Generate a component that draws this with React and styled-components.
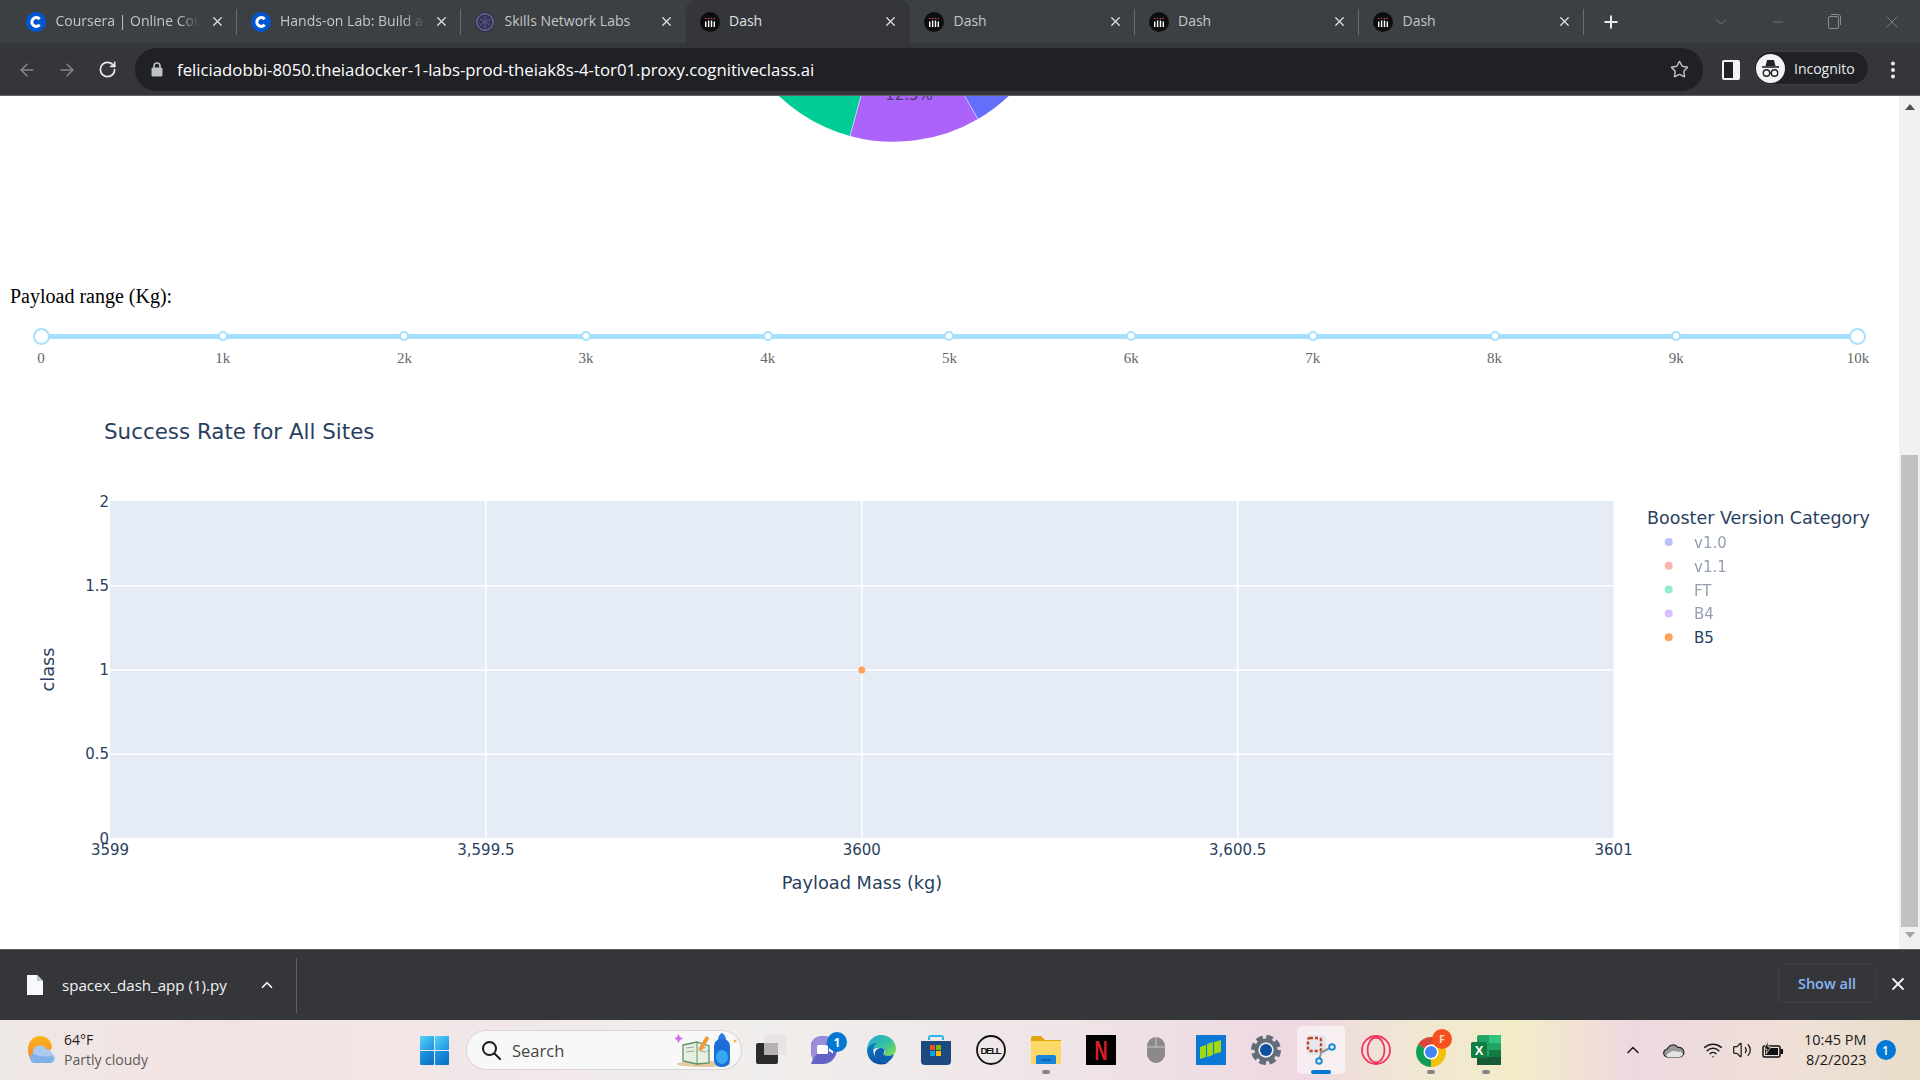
import React from 'react'
import styled, { createGlobalStyle } from 'styled-components'
import { ArrowLeft, ArrowRight, RotateCw, Star, Plus, ChevronUp, ChevronDown, Minus, X, Wifi, Volume2 } from 'lucide-react'

const UI_FONT = '"Open Sans", "Noto Sans", "Liberation Sans", sans-serif'
const PLOT_FONT = '"DejaVu Sans", Verdana, sans-serif'

const Global = createGlobalStyle`
  html, body { margin: 0; padding: 0; overflow: hidden; background: #fff; }
  * { box-sizing: border-box; }
`

const Screen = styled.div`
  width: 1920px;
  height: 1080px;
  display: flex;
  flex-direction: column;
  overflow: hidden;
  font-family: ${UI_FONT};
`

/* browser chrome */
const TabStrip = styled.div`
  height: 43px;
  flex: none;
  display: flex;
  padding-left: 12px;
  background: #3c4043;
`
const Tab = styled.div`
  width: 224.5px;
  height: 43px;
  flex: none;
  display: flex;
  align-items: center;
  padding: 0 12px 0 14px;
  gap: 9.5px;
  position: relative;
  background: ${(p) => (p.$active ? '#35363a' : 'transparent')};
  border-radius: ${(p) => (p.$active ? '10px 10px 0 0' : '0')};
  &::after {
    content: '';
    display: ${(p) => (p.$sep ? 'block' : 'none')};
    position: absolute;
    right: 0;
    top: 9px;
    height: 26px;
    width: 1px;
    background: #6a6d70;
  }
`
const TabTitle = styled.span`
  flex: 1;
  margin-top: -2px;
  font-size: 14px;
  color: ${(p) => (p.$active ? '#dfe1e5' : '#c4c7ca')};
  white-space: nowrap;
  overflow: hidden;
  -webkit-mask-image: ${(p) => (p.$fade ? 'linear-gradient(90deg, #000 85%, transparent)' : 'none')};
`
const NewTab = styled.div`
  width: 40px;
  display: flex;
  align-items: center;
  justify-content: center;
  margin-left: 7px;
  color: #e8eaed;
`
const WindowControls = styled.div`
  margin-left: auto;
  display: flex;
  align-items: center;
  color: #8b8e91;
`
const WindowButton = styled.div`
  width: 57px;
  display: flex;
  justify-content: center;
`
const Toolbar = styled.div`
  height: 53px;
  flex: none;
  display: flex;
  align-items: flex-start;
  padding: 5px 0 0 7px;
  background: #35363a;
  border-bottom: 1px solid #606164;
`
const NavButton = styled.div`
  width: 40px;
  height: 43px;
  flex: none;
  display: flex;
  align-items: center;
  justify-content: center;
  color: ${(p) => (p.$on ? '#e8eaed' : '#85888b')};
`
const AddressBar = styled.div`
  width: 1568px;
  height: 43px;
  flex: none;
  margin-left: 8px;
  padding: 0 14px 0 16px;
  display: flex;
  align-items: center;
  border-radius: 22px;
  background: #202124;
  color: #bdc1c6;
`
const Url = styled.span`
  margin-left: 14px;
  font-size: 16.76px;
  color: #fff;
  white-space: nowrap;
  flex: 1;
`
const PanelButton = styled.div`
  width: 47px;
  height: 43px;
  margin-left: 4px;
  flex: none;
  display: flex;
  align-items: center;
  justify-content: center;
`
const IncognitoPill = styled.div`
  width: 115px;
  height: 34px;
  margin-top: 3px;
  flex: none;
  display: flex;
  align-items: center;
  padding-left: 1px;
  gap: 9px;
  border-radius: 17px;
  background: #202124;
  border: 1px solid #3c3d41;
  color: #e8eaed;
  font-size: 14px;
`
const MenuDots = styled.div`
  flex: 1;
  height: 43px;
  padding-right: 4px;
  display: flex;
  align-items: center;
  justify-content: center;
`

/* page area */
const Viewport = styled.div`
  flex: 1;
  min-height: 0;
  display: flex;
`
const Page = styled.main`
  flex: 1;
  min-width: 0;
  display: flex;
  flex-direction: column;
  background: #fff;
`
const PlotSvg = styled.svg`
  display: block;
  flex: none;
`
const ChartSvg = styled(PlotSvg)`
  margin-top: auto;
`
const RangeLabel = styled.div`
  height: 23px;
  margin-top: -1px;
  padding-left: 10px;
  font: 20px/23px "Liberation Serif", serif;
  color: #000;
`
const Slider = styled.div`
  margin: 19.5px 41px 0 41px;
  height: 17px;
  display: flex;
  justify-content: space-between;
  position: relative;
  &::before {
    content: '';
    position: absolute;
    left: 0;
    right: 0;
    top: 6px;
    height: 5px;
    background: #a6e0fc;
  }
`
const Mark = styled.div`
  width: 0;
  display: flex;
  flex-direction: column;
  align-items: center;
  position: relative;
`
const Dot = styled.div`
  flex: none;
  width: ${(p) => (p.$handle ? '17px' : '10px')};
  height: ${(p) => (p.$handle ? '17px' : '10px')};
  margin-top: ${(p) => (p.$handle ? '0' : '3.5px')};
  border-radius: 50%;
  background: #fff;
  border: 2px solid #a6e0fc;
`
const MarkLabel = styled.div`
  margin-top: ${(p) => (p.$handle ? '4px' : '7.5px')};
  font: 15px/18px "Liberation Serif", serif;
  color: #666;
  white-space: nowrap;
`
const Scrollbar = styled.div`
  width: 21px;
  flex: none;
  display: flex;
  flex-direction: column;
  align-items: center;
  background: #f1f1f1;
`
const ScrollArrow = styled.div`
  width: 0;
  height: 0;
  flex: none;
  margin: ${(p) => (p.$down ? '5px 0 0' : '8px 0 0')};
  border-left: 5px solid transparent;
  border-right: 5px solid transparent;
  border-bottom: ${(p) => (p.$down ? '0' : '6px solid #505050')};
  border-top: ${(p) => (p.$down ? '6px solid #a3a3a3' : '0')};
`
const ScrollThumb = styled.div`
  width: 17px;
  height: 472px;
  flex: none;
  margin-top: 345px;
  background: #c1c1c1;
`

/* download shelf */
const Shelf = styled.div`
  height: 71px;
  flex: none;
  display: flex;
  align-items: center;
  padding-left: 27px;
  background: #35363a;
  border-top: 1px solid #5a5b5e;
  color: #fff;
`
const FileName = styled.span`
  margin-left: 19px;
  margin-bottom: 1px;
  font-size: 15.1px;
  color: #f1f3f4;
  width: 196px;
  white-space: nowrap;
`
const ShelfDivider = styled.div`
  width: 1px;
  height: 55px;
  margin-left: 20px;
  background: #5f6164;
`
const ShowAll = styled.div`
  margin: 0 0 3px auto;
  width: 98px;
  height: 39px;
  display: flex;
  align-items: center;
  justify-content: center;
  border: 1px solid #3f4044;
  border-radius: 4px;
  color: #8ab4f8;
  font-size: 14.5px;
  font-weight: 600;
`
const ShelfClose = styled.div`
  width: 44px;
  margin-bottom: 3px;
  display: flex;
  justify-content: center;
  color: #f1f3f4;
`

/* windows taskbar */
const Taskbar = styled.div`
  height: 60px;
  flex: none;
  display: flex;
  align-items: center;
  background: linear-gradient(90deg, #eee8e4 0%, #f3e2e2 12%, #f1e8ea 28%, #f0eeec 40%, #efe3e6 57%, #eed8e2 68%, #f0e6d4 73%, #f3ecc8 79%, #eed8e0 85%, #efe0d6 94%, #e8dcc8 100%);
`
const Weather = styled.div`
  width: 420px;
  flex: none;
  display: flex;
  align-items: center;
  padding-left: 28px;
  gap: 9px;
`
const WeatherText = styled.div`
  display: flex;
  flex-direction: column;
  font-size: 14px;
  line-height: 20px;
  color: #1c1c1c;
`
const WeatherSub = styled.span`
  color: #5a5a5a;
`
const SearchPill = styled.div`
  width: 274px;
  height: 38px;
  flex: none;
  margin-left: 18px;
  display: flex;
  align-items: center;
  padding: 0 0 0 14px;
  gap: 11px;
  border-radius: 19px;
  background: #f9f8f8;
  box-shadow: 0 0 0 1px #d9d5d5;
  font-size: 16.5px;
  color: #444;
`
const SearchText = styled.span`
  flex: 1;
`
const TaskIcons = styled.div`
  display: flex;
  margin-left: 2.5px;
`
const TaskSlot = styled.div`
  width: 55px;
  height: 60px;
  flex: none;
  display: flex;
  align-items: center;
  justify-content: center;
  position: relative;
  &::before {
    content: '';
    display: ${(p) => (p.$active ? 'block' : 'none')};
    position: absolute;
    left: 3px;
    right: 4px;
    top: 6px;
    bottom: 6px;
    border-radius: 5px;
    background: rgba(255, 255, 255, 0.55);
  }
  &::after {
    content: '';
    display: ${(p) => (p.$active || p.$running ? 'block' : 'none')};
    position: absolute;
    left: 50%;
    bottom: 6px;
    width: ${(p) => (p.$active ? '20px' : '8px')};
    height: 4px;
    margin-left: ${(p) => (p.$active ? '-10px' : '-4px')};
    border-radius: 2px;
    background: ${(p) => (p.$active ? '#0078d4' : '#858585')};
  }
  & > svg { position: relative; }
`
const Tray = styled.div`
  flex: 1;
  display: flex;
  align-items: center;
  padding-left: 102px;
  color: #1a1a1a;
`
const TrayIcon = styled.div`
  width: ${(p) => p.$w}px;
  display: flex;
  justify-content: center;
`
const Clock = styled.div`
  width: 73px;
  text-align: right;
  font-size: 14.5px;
  line-height: 20px;
  color: #1a1a1a;
  margin-left: 3px;
`
const NotifyBadge = styled.div`
  width: 20px;
  height: 20px;
  margin-left: 9px;
  border-radius: 50%;
  background: #0078d4;
  color: #fff;
  font-size: 12px;
  font-weight: 600;
  display: flex;
  align-items: center;
  justify-content: center;
`

const CourseraIcon = () => (
  <svg width="20" height="20" viewBox="0 0 20 20">
    <circle cx="10" cy="10" r="10" fill="#0056d2" />
    <path d="M13.6 7.2A4.4 4.4 0 1 0 13.6 12.8" fill="none" stroke="#fff" strokeWidth="3" />
  </svg>
)
const LabsIcon = () => (
  <svg width="20" height="20" viewBox="0 0 20 20">
    <circle cx="10" cy="10" r="10" fill="#2d2a4a" />
    <circle cx="10" cy="10" r="8.3" fill="#37355c" stroke="#77729f" strokeWidth="1.2" />
    <path d="M10 4v12M5 7l10 6M15 7L5 13" stroke="#625e8c" strokeWidth="0.9" />
  </svg>
)
const DashIcon = () => (
  <svg width="20" height="20" viewBox="0 0 20 20">
    <circle cx="10" cy="10" r="10" fill="#0d0d0f" />
    <path d="M5.7 6v1M8.6 6v1M11.5 6v1M14.3 6v1" stroke="#e0457b" strokeWidth="1.4" />
    <path d="M5.7 9.5V15M8.6 8.5V15M11.5 8.5V15M14.3 9.5V15" stroke="#fff" strokeWidth="1.4" />
  </svg>
)
const LockIcon = () => (
  <svg width="12" height="15" viewBox="0 0 12 15">
    <path d="M3 6V4a3 3 0 0 1 6 0v2" fill="none" stroke="#bdc1c6" strokeWidth="1.6" />
    <rect x="0.5" y="5.5" width="11" height="9" rx="1.5" fill="#bdc1c6" />
  </svg>
)
const IncognitoIcon = () => (
  <svg width="29" height="29" viewBox="0 0 29 29">
    <circle cx="14.5" cy="14.5" r="14.5" fill="#f1f3f4" />
    <path d="M9.5 12l1.6-6h6.8l1.6 6z" fill="#202124" />
    <path d="M6 13h17" stroke="#202124" strokeWidth="1.6" />
    <circle cx="10.5" cy="19" r="3.2" fill="none" stroke="#202124" strokeWidth="1.4" />
    <circle cx="18.5" cy="19" r="3.2" fill="none" stroke="#202124" strokeWidth="1.4" />
    <path d="M13.7 19h1.6" stroke="#202124" strokeWidth="1.4" />
  </svg>
)
const SidePanelIcon = () => (
  <svg width="18" height="20" viewBox="0 0 18 20">
    <rect x="1" y="1" width="16" height="18" rx="1" fill="#202124" stroke="#f1f3f4" strokeWidth="2" />
    <rect x="11" y="1" width="6" height="18" fill="#f1f3f4" />
  </svg>
)
const VDots = () => (
  <svg width="4" height="18" viewBox="0 0 4 18" fill="#e8eaed">
    <circle cx="2" cy="2.5" r="2" />
    <circle cx="2" cy="9" r="2" />
    <circle cx="2" cy="15.5" r="2" />
  </svg>
)
const FileIcon = () => (
  <svg width="16" height="20" viewBox="0 0 16 20">
    <path d="M0 0h10l6 6v14H0z" fill="#f8f9fa" />
    <path d="M10 0v6h6" fill="#c4c7ca" />
  </svg>
)
const WeatherIcon = () => (
  <svg width="27" height="28" viewBox="0 0 27 28">
    <defs>
      <linearGradient id="sunFill" x1="0" y1="0" x2="0" y2="1">
        <stop offset="0" stopColor="#fbb614" />
        <stop offset="1" stopColor="#f3803a" />
      </linearGradient>
    </defs>
    <path d="M12 0C5 0 0 6 0 13s2 13 10 13L24 12C24 5 19 0 12 0z" fill="url(#sunFill)" />
    <path d="M7 27a5 5 0 0 1-2-9.5A7 7 0 0 1 18 13a6 6 0 0 1 6 5 4.6 4.6 0 0 1-1 9z" fill="#a9cbf0" />
    <path d="M7 27a5 5 0 0 1-2-9.5c5 3 14 4 19 2a4.6 4.6 0 0 1-1 7.5z" fill="#7fb0e6" />
  </svg>
)
const StartIcon = () => (
  <svg width="29" height="29" viewBox="0 0 29 29">
    <defs>
      <linearGradient id="winA" x1="0" y1="0" x2="1" y2="1">
        <stop offset="0" stopColor="#55d4f9" />
        <stop offset="1" stopColor="#1a8fe0" />
      </linearGradient>
      <linearGradient id="winB" x1="0" y1="0" x2="1" y2="1">
        <stop offset="0" stopColor="#1e9be6" />
        <stop offset="1" stopColor="#0b6cc2" />
      </linearGradient>
    </defs>
    <rect width="14" height="14" rx="1" fill="url(#winA)" />
    <rect x="15" width="14" height="14" rx="1" fill="url(#winA)" />
    <rect y="15" width="14" height="14" rx="1" fill="url(#winB)" />
    <rect x="15" y="15" width="14" height="14" rx="1" fill="url(#winB)" />
  </svg>
)
const SearchGlass = () => (
  <svg width="20" height="20" viewBox="0 0 20 20" fill="none" stroke="#1b1b1b" strokeWidth="2">
    <circle cx="8.5" cy="8.5" r="6.5" />
    <path d="M13.5 13.5L19 19" strokeLinecap="round" />
  </svg>
)
const SearchArt = () => (
  <svg width="66" height="34" viewBox="0 0 66 34">
    <path d="M2 4l1.5-3L5 4l3 1.5L5 7 3.500 10 2 7l-3-1.500z" fill="#cf6ee8" />
    <ellipse cx="29" cy="31" rx="27" ry="3" fill="#e5c9a0" />
    <path d="M8 12l14-3 12 4v17l-12 1-14-3z" fill="#e9efe0" stroke="#5c9367" strokeWidth="1.3" />
    <path d="M22 9v22" stroke="#5c9367" strokeWidth="1" />
    <path d="M11 15l8-1M11 19l8-1M25 14l6 1M25 18l6 1" stroke="#9aa89a" strokeWidth="1" />
    <path d="M24 15L31 3l3.500 2-7 12-4 1z" fill="#f29b3c" />
    <circle cx="33" cy="18" r="1" fill="#4cc2e8" />
    <path d="M43 7c0-4 3-7 4-7s4 3 4 7z" fill="#2b7be0" />
    <rect x="39" y="6" width="16" height="28" rx="7" fill="#1c6fd8" />
    <ellipse cx="47" cy="24" rx="6" ry="7" fill="#39a8f2" />
    <circle cx="60" cy="8" r="1.500" fill="#f2b84c" />
  </svg>
)
const TaskViewIcon = () => (
  <svg width="30" height="30" viewBox="0 0 30 30">
    <rect x="0" y="8" width="22" height="21" rx="2" fill="#2b2b2b" />
    <rect x="8" y="0" width="22" height="20" rx="2" fill="#e6e3e3" fillOpacity="0.88" />
    <rect x="8" y="8" width="14" height="12" fill="#b3b1b1" />
  </svg>
)
const ChatIcon = () => (
  <svg width="40" height="34" viewBox="0 0 40 34" style={{ marginTop: -3, marginLeft: 2 }}>
    <path d="M4 14C4 8 9 4 16 4s14 4 14 13-7 15-14 15H4l2-5c-2-3-2-8-2-13z" fill="#6264c8" />
    <path d="M4 14C4 8 9 4 16 4c3 0 6 1 8 2L6 27c-2-3-2-8-2-13z" fill="#9a8ddb" />
    <rect x="10" y="13" width="11" height="9" rx="1.500" fill="#fff" />
    <path d="M22 16l4-2.500v8L22 19z" fill="#fff" />
    <circle cx="30" cy="10" r="10" fill="#0078d4" />
    <text x="30" y="14.500" textAnchor="middle" fontSize="12" fontWeight="700" fill="#fff" fontFamily={UI_FONT}>1</text>
  </svg>
)
const EdgeIcon = () => (
  <svg width="30" height="30" viewBox="0 0 30 30">
    <defs>
      <linearGradient id="edgeG" x1="0" y1="0" x2="1" y2="0.8">
        <stop offset="0" stopColor="#1fa7dc" />
        <stop offset="0.6" stopColor="#35c1a0" />
        <stop offset="1" stopColor="#7ed957" />
      </linearGradient>
      <linearGradient id="edgeB" x1="0" y1="0" x2="1" y2="1">
        <stop offset="0" stopColor="#0f7fd0" />
        <stop offset="1" stopColor="#0a3f8c" />
      </linearGradient>
    </defs>
    <path d="M1 15C1 7 7 0 15 0c8 0 15 6 15 14 0 5-4 7-8 7-3 0-5-1-5-2 2-1 3-3 1-5-3-2-9-2-12 2z" fill="url(#edgeG)" />
    <path d="M1 15c2-5 6-7 10-7-4 2-5 8-2 13 3 5 9 7 14 6-8 6-22 1-22-12z" fill="url(#edgeB)" />
    <path d="M9 17c2-4 6-5 9-3 1 2 0 4-1 5 1 2 7 3 11 0-2 6-6 9-11 9-5-1-9-6-8-11z" fill="#0d5fb4" />
  </svg>
)
const StoreIcon = () => (
  <svg width="30" height="30" viewBox="0 0 30 30">
    <path d="M8 5V3a2 2 0 0 1 2-2h10a2 2 0 0 1 2 2v2" fill="none" stroke="#2cb6e8" strokeWidth="2" />
    <path d="M0 6h30v20a4 4 0 0 1-4 4H4a4 4 0 0 1-4-4z" fill="#1c4a80" />
    <rect x="9" y="10" width="5" height="5" fill="#f25022" />
    <rect x="15" y="10" width="5" height="5" fill="#7fba00" />
    <rect x="9" y="16" width="5" height="5" fill="#00a4ef" />
    <rect x="15" y="16" width="5" height="5" fill="#ffb900" />
  </svg>
)
const DellIcon = () => (
  <svg width="30" height="30" viewBox="0 0 30 30">
    <circle cx="15" cy="15" r="14" fill="none" stroke="#111" strokeWidth="1.800" />
    <text x="15" y="18.500" textAnchor="middle" fontSize="9.500" fontWeight="700" fill="#111" fontFamily='"Liberation Sans", sans-serif' textLength="21">DELL</text>
  </svg>
)
const FolderIcon = () => (
  <svg width="30" height="30" viewBox="0 0 30 30">
    <path d="M0 3a2 2 0 0 1 2-2h8l4 4h16v5H0z" fill="#e2a40d" />
    <path d="M0 6h30v22a1 1 0 0 1-1 1H1a1 1 0 0 1-1-1z" fill="#fcd867" />
    <path d="M5 29v-7a2 2 0 0 1 2-2h16a2 2 0 0 1 2 2v7z" fill="#1a86d9" />
    <path d="M10 25h10" stroke="#0c5ba8" strokeWidth="1.500" />
  </svg>
)
const NetflixIcon = () => (
  <svg width="30" height="30" viewBox="0 0 30 30">
    <rect width="30" height="30" fill="#000" />
    <text x="15" y="24.500" textAnchor="middle" fontSize="27" fontWeight="700" fill="#d81f26" fontFamily='"Liberation Sans", sans-serif' textLength="13" lengthAdjust="spacingAndGlyphs">N</text>
  </svg>
)
const MouseIcon = () => (
  <svg width="30" height="30" viewBox="0 0 30 30">
    <rect x="6" y="2" width="18" height="26" rx="9" fill="#8d888c" />
    <path d="M6 12h18M15 2v10" stroke="#c9c4c8" strokeWidth="1" />
  </svg>
)
const BarsIcon = () => (
  <svg width="30" height="30" viewBox="0 0 30 30">
    <rect width="30" height="30" fill="#0a78d4" />
    <path d="M4 12l6-2v12l-6 2zM11 9l6-2v13l-6 2zM18 7l7-2v12l-7 2z" fill="#a0d911" />
  </svg>
)
const GearIcon = () => (
  <svg width="30" height="30" viewBox="0 0 30 30">
    <circle cx="15" cy="15" r="12" fill="none" stroke="#626d78" strokeWidth="6" strokeDasharray="6.200 3.200" />
    <circle cx="15" cy="15" r="9.500" fill="none" stroke="#626d78" strokeWidth="4" />
    <circle cx="15" cy="15" r="7.500" fill="#e6edf5" />
    <circle cx="15" cy="15" r="6" fill="#0f4f9e" />
  </svg>
)
const SnipIcon = () => (
  <svg width="30" height="30" viewBox="0 0 30 30">
    <rect x="0" y="0" width="20" height="20" rx="3" fill="#e3e6ea" />
    <rect x="2" y="3" width="13" height="13" rx="2" fill="none" stroke="#c8401e" strokeWidth="2.400" strokeDasharray="3 2" />
    <path d="M14 18l10-5M15 19l-2 5" stroke="#8a8f96" strokeWidth="2" />
    <circle cx="26" cy="12" r="2.800" fill="none" stroke="#1a8cd8" strokeWidth="2" />
    <circle cx="13" cy="26" r="2.800" fill="none" stroke="#1a8cd8" strokeWidth="2" />
  </svg>
)
const OperaIcon = () => (
  <svg width="30" height="30" viewBox="0 0 30 30" fill="none" stroke="#f0385e" strokeWidth="1.800">
    <circle cx="15" cy="15" r="14" />
    <ellipse cx="15" cy="15" rx="8.500" ry="12.500" />
  </svg>
)
const ChromeIcon = () => (
  <svg width="40" height="38" viewBox="0 0 40 38" style={{ marginTop: -5, marginLeft: 9 }}>
    <path d="M15 23L2 15.500A15 15 0 0 1 28 15.500H15z" fill="#db4437" />
    <path d="M15 23L2.010 15.500A15 15 0 0 0 15 38l7.500-13z" fill="#0f9d58" />
    <path d="M15 15.500H28A15 15 0 0 1 15 38z" fill="#f4c20d" />
    <circle cx="15" cy="23" r="7.500" fill="#fff" />
    <circle cx="15" cy="23" r="6" fill="#4285f4" />
    <circle cx="26" cy="10" r="10" fill="#f4511e" />
    <text x="26" y="14" textAnchor="middle" fontSize="11" fontWeight="700" fill="#fbd4c4" fontFamily={UI_FONT}>F</text>
  </svg>
)
const ExcelIcon = () => (
  <svg width="30" height="30" viewBox="0 0 30 30">
    <rect x="6" y="0" width="24" height="30" rx="2" fill="#21a366" />
    <rect x="18" y="0" width="12" height="8" fill="#33c481" />
    <rect x="18" y="15" width="12" height="8" fill="#107c41" />
    <rect x="6" y="22" width="24" height="8" fill="#185c37" />
    <rect x="0" y="7" width="16" height="16" rx="1.500" fill="#107c41" />
    <text x="8" y="19.500" textAnchor="middle" fontSize="13" fontWeight="700" fill="#fff" fontFamily='"Liberation Sans", sans-serif'>X</text>
  </svg>
)
const CloudIcon = () => (
  <svg width="22" height="16" viewBox="0 0 22 16">
    <path d="M5 15a4 4 0 0 1-.6-8A6 6 0 0 1 15 5.500 4.800 4.800 0 0 1 17 15z" fill="#9a9a9a" stroke="#222" strokeWidth="1.200" />
    <path d="M3 14c3-5 9-6 12-4 2-1 4 0 5 3l-3 2H5z" fill="#e4e4e4" />
  </svg>
)
const BatteryIcon = () => (
  <svg width="22" height="18" viewBox="0 0 22 18">
    <rect x="1" y="5" width="17" height="11" rx="1.500" fill="none" stroke="#111" strokeWidth="1.500" />
    <rect x="3" y="7" width="13" height="7" fill="#111" />
    <rect x="18.500" y="8" width="2.500" height="5" fill="#111" />
    <path d="M6 0L2 8h3l-1 5 5-7H6z" fill="#111" stroke="#efdcd8" strokeWidth="0.800" />
  </svg>
)

const tabs = [
  { title: 'Coursera | Online Cou', icon: <CourseraIcon />, sep: true, fade: true },
  { title: 'Hands-on Lab: Build a', icon: <CourseraIcon />, sep: true, fade: true },
  { title: 'Skills Network Labs', icon: <LabsIcon /> },
  { title: 'Dash', icon: <DashIcon />, active: true },
  { title: 'Dash', icon: <DashIcon />, sep: true },
  { title: 'Dash', icon: <DashIcon />, sep: true },
  { title: 'Dash', icon: <DashIcon />, sep: true },
]

const markLabels = ['0', '1k', '2k', '3k', '4k', '5k', '6k', '7k', '8k', '9k', '10k']

const legend = [
  { name: 'v1.0', color: '#636efa', off: true },
  { name: 'v1.1', color: '#ef553b', off: true },
  { name: 'FT', color: '#00cc96', off: true },
  { name: 'B4', color: '#ab63fa', off: true },
  { name: 'B5', color: '#ffa15a' },
]

const PLOT = { left: 110, right: 1613.6, top: 501, bottom: 838 }
const xTicks = ['3599', '3,599.5', '3600', '3,600.5', '3601']
const yTicks = ['2', '1.5', '1', '0.5', '0']

const PieSlice = () => (
  <PlotSvg width="1899" height="190" viewBox="0 96 1899 190">
    <path d="M894 -25L850 136A167 167 0 0 1 727 -25z" fill="#00cc96" />
    <path d="M894 -25L978 119A167 167 0 0 1 850 136z" fill="#ab63fa" />
    <path d="M894 -25L1061 -25A167 167 0 0 1 978 119z" fill="#636efa" />
    <path d="M894 -25L850 136M894 -25L978 119" stroke="#fff" strokeWidth="0.5" />
    <text x="909" y="100" textAnchor="middle" fontSize="15" fill="#4a3a68" fontFamily={PLOT_FONT}>12.5%</text>
  </PlotSvg>
)

const Chart = () => {
  const w = PLOT.right - PLOT.left
  const h = PLOT.bottom - PLOT.top
  return (
    <ChartSvg width="1899" height="549" viewBox="0 400 1899 549" fontFamily={PLOT_FONT} fill="#2a3f5f">
      <text x="104" y="439" fontSize="21.4">Success Rate for All Sites</text>
      <rect x={PLOT.left} y={PLOT.top} width={w} height={h} fill="#e5ecf6" />
      {[1, 2, 3].map((i) => (
        <line key={i} x1={PLOT.left + (w * i) / 4} x2={PLOT.left + (w * i) / 4} y1={PLOT.top} y2={PLOT.bottom} stroke="#fff" strokeWidth="1.5" />
      ))}
      {[1, 2, 3].map((i) => (
        <line key={i} x1={PLOT.left} x2={PLOT.right} y1={PLOT.top + (h * i) / 4 + 0.5} y2={PLOT.top + (h * i) / 4 + 0.5} stroke="#fff" strokeWidth="1.5" />
      ))}
      {yTicks.map((t, i) => (
        <text key={t} x="109" y={PLOT.top + (h * i) / 4 + 5.5} fontSize="15" textAnchor="end">{t}</text>
      ))}
      {xTicks.map((t, i) => (
        <text key={t} x={PLOT.left + (w * i) / 4} y="855" fontSize="15" textAnchor="middle">{t}</text>
      ))}
      <text x="862" y="889" fontSize="17.75" textAnchor="middle">Payload Mass (kg)</text>
      <text x="54" y="669.500" fontSize="17.75" textAnchor="middle" transform="rotate(-90 54 669.500)">class</text>
      <circle cx={PLOT.left + w / 2} cy={PLOT.top + h / 2 + 0.5} r="3.500" fill="#ffa15a" />
      <text x="1647" y="524" fontSize="17.500">Booster Version Category</text>
      {legend.map((item, i) => (
        <g key={item.name} opacity={item.off ? 0.5 : 1}>
          <circle cx="1668.700" cy={542 + i * 23.8} r="4" fill={item.color} opacity={item.off ? 0.85 : 1} />
          <text x="1694" y={548 + i * 23.8} fontSize="15">{item.name}</text>
        </g>
      ))}
    </ChartSvg>
  )
}

export default function App() {
  return (
    <Screen>
      <Global />
      <TabStrip>
        {tabs.map((tab, i) => (
          <Tab key={i} $active={tab.active} $sep={tab.sep}>
            {tab.icon}
            <TabTitle $active={tab.active} $fade={tab.fade}>{tab.title}</TabTitle>
            <X size={15} color="#dfe1e5" strokeWidth={2} />
          </Tab>
        ))}
        <NewTab><Plus size={20} strokeWidth={2.4} /></NewTab>
        <WindowControls>
          <WindowButton><ChevronDown size={18} strokeWidth={1} /></WindowButton>
          <WindowButton><Minus size={16} strokeWidth={1} /></WindowButton>
          <WindowButton>
            <svg width="13" height="15" viewBox="0 0 13 15" fill="none" stroke="currentColor">
              <rect x="0.5" y="2.500" width="10" height="12" rx="1.500" />
              <path d="M3 .5h7a2.500 2.500 0 0 1 2.500 2.500v8" />
            </svg>
          </WindowButton>
          <WindowButton><X size={20} strokeWidth={1} /></WindowButton>
        </WindowControls>
      </TabStrip>

      <Toolbar>
        <NavButton><ArrowLeft size={20} strokeWidth={1.8} /></NavButton>
        <NavButton><ArrowRight size={20} strokeWidth={1.8} /></NavButton>
        <NavButton $on><RotateCw size={19} strokeWidth={2.2} /></NavButton>
        <AddressBar>
          <LockIcon />
          <Url>feliciadobbi-8050.theiadocker-1-labs-prod-theiak8s-4-tor01.proxy.cognitiveclass.ai</Url>
          <Star size={19} strokeWidth={1.8} />
        </AddressBar>
        <PanelButton><SidePanelIcon /></PanelButton>
        <IncognitoPill><IncognitoIcon />Incognito</IncognitoPill>
        <MenuDots><VDots /></MenuDots>
      </Toolbar>

      <Viewport>
        <Page>
          <PieSlice />
          <RangeLabel>Payload range (Kg):</RangeLabel>
          <Slider>
            {markLabels.map((label, i) => {
              const handle = i === 0 || i === markLabels.length - 1
              return (
                <Mark key={label}>
                  <Dot $handle={handle} />
                  <MarkLabel $handle={handle}>{label}</MarkLabel>
                </Mark>
              )
            })}
          </Slider>
          <Chart />
        </Page>
        <Scrollbar>
          <ScrollArrow />
          <ScrollThumb />
          <ScrollArrow $down />
        </Scrollbar>
      </Viewport>

      <Shelf>
        <FileIcon />
        <FileName>spacex_dash_app (1).py</FileName>
        <ChevronUp size={18} strokeWidth={2.2} />
        <ShelfDivider />
        <ShowAll>Show all</ShowAll>
        <ShelfClose><X size={20} strokeWidth={2.2} /></ShelfClose>
      </Shelf>

      <Taskbar>
        <Weather>
          <WeatherIcon />
          <WeatherText>
            <span>64°F</span>
            <WeatherSub>Partly cloudy</WeatherSub>
          </WeatherText>
        </Weather>
        <StartIcon />
        <SearchPill>
          <SearchGlass />
          <SearchText>Search</SearchText>
          <SearchArt />
        </SearchPill>
        <TaskIcons>
          <TaskSlot><TaskViewIcon /></TaskSlot>
          <TaskSlot><ChatIcon /></TaskSlot>
          <TaskSlot><EdgeIcon /></TaskSlot>
          <TaskSlot><StoreIcon /></TaskSlot>
          <TaskSlot><DellIcon /></TaskSlot>
          <TaskSlot $running><FolderIcon /></TaskSlot>
          <TaskSlot><NetflixIcon /></TaskSlot>
          <TaskSlot><MouseIcon /></TaskSlot>
          <TaskSlot><BarsIcon /></TaskSlot>
          <TaskSlot><GearIcon /></TaskSlot>
          <TaskSlot $active><SnipIcon /></TaskSlot>
          <TaskSlot><OperaIcon /></TaskSlot>
          <TaskSlot $running><ChromeIcon /></TaskSlot>
          <TaskSlot $running><ExcelIcon /></TaskSlot>
        </TaskIcons>
        <Tray>
          <TrayIcon $w={35}><ChevronUp size={20} strokeWidth={1.8} /></TrayIcon>
          <TrayIcon $w={46}><CloudIcon /></TrayIcon>
          <TrayIcon $w={32}><Wifi size={20} strokeWidth={1.8} /></TrayIcon>
          <TrayIcon $w={26}><Volume2 size={20} strokeWidth={1.5} /></TrayIcon>
          <TrayIcon $w={36}><BatteryIcon /></TrayIcon>
          <Clock>10:45 PM<br />8/2/2023</Clock>
          <NotifyBadge>1</NotifyBadge>
        </Tray>
      </Taskbar>
    </Screen>
  )
}
